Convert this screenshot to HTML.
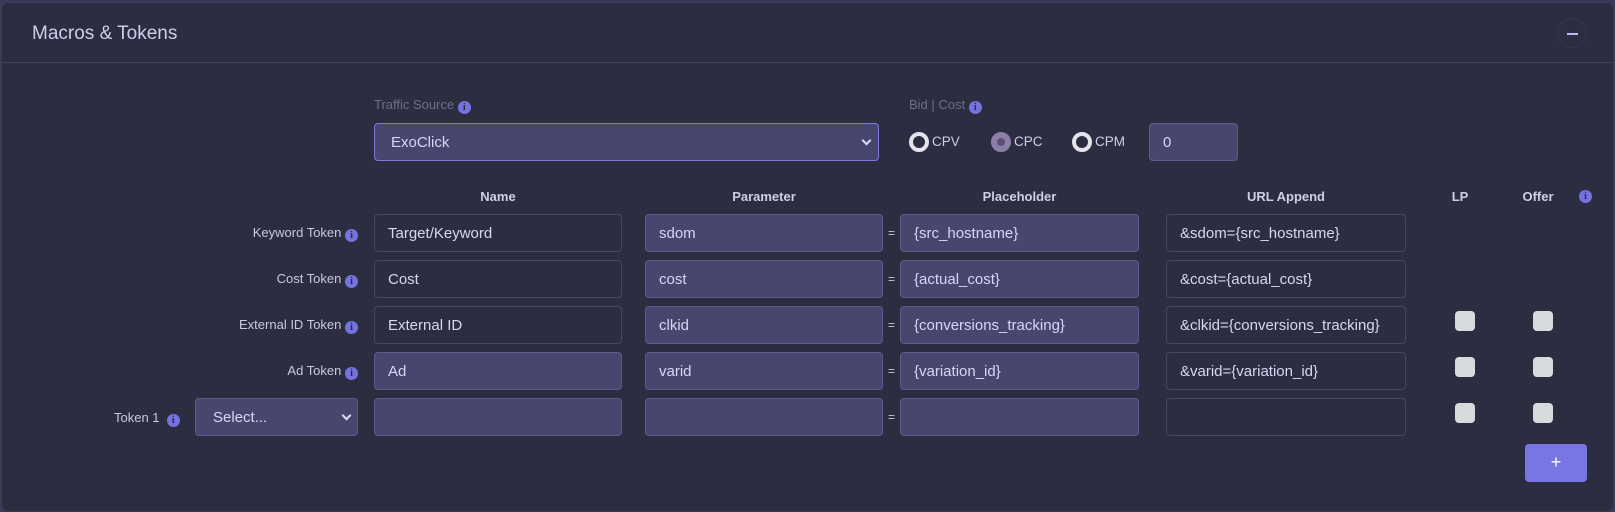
<!DOCTYPE html>
<html><head><meta charset="utf-8"><style>
*{box-sizing:border-box;margin:0;padding:0}
body{width:1615px;height:512px;background:#3b3a58;font-family:"Liberation Sans",sans-serif;position:relative;overflow:hidden}
.card{position:absolute;left:2px;top:3px;width:1611px;height:508px;background:#2d2d42;border-radius:6px}
.hline{position:absolute;left:2px;top:62px;width:1611px;height:1px;background:#45445e}
.a{position:absolute}
.title{left:32px;top:23px;font-size:19px;color:#cfcdea}
.minus{left:1557px;top:18px;width:30px;height:30px;border-radius:50%;border:1px solid #38374f}
.minus:after{content:"";position:absolute;left:9px;top:14px;width:11px;height:2px;background:#bcbaf0}
.lbl{font-size:13px;color:#6f6e85}
.info{display:inline-block;width:13px;height:13px;border-radius:50%;background:#7673e0;color:#2d2d42;font-size:10px;font-weight:bold;text-align:center;line-height:13px;vertical-align:-1px;font-family:"Liberation Serif",serif}
.in{position:absolute;height:38px;border-radius:4px;font-size:15px;color:#d8d6f2;padding-left:13px;line-height:38px;white-space:nowrap;overflow:hidden}
.p{background:#47466e;border:1px solid #5c5b8b}
.d{background:#2d2d42;border:1px solid #48475f}
.hd{position:absolute;top:189px;font-size:13px;font-weight:bold;color:#cfcde8;text-align:center}
.rl{position:absolute;font-size:13px;color:#c9c7e2;text-align:right;width:300px;left:58px}
.eq{position:absolute;left:888px;font-size:12px;color:#c9c7e2}
.cb{position:absolute;width:20px;height:20px;border-radius:4px;background:#d8dbde}
.chev{position:absolute;width:7px;height:7px;border-right:2px solid #e0def5;border-bottom:2px solid #e0def5;transform:rotate(45deg)}
.radio{position:absolute;width:20px;height:20px;border-radius:50%;border:4px solid #e4e4ea;background:#2d2d42}
.rt{position:absolute;font-size:13.5px;color:#cfcde8}
</style></head><body>
<div class="card"></div>
<div class="hline"></div>
<div class="a title">Macros &amp; Tokens</div>
<div class="a minus"></div>

<div class="a lbl" style="left:374px;top:97px">Traffic Source <span class="info">i</span></div>
<div class="in p" style="left:374px;top:123px;width:505px;border-color:#7b78e0;padding-left:16px">ExoClick</div>
<div class="chev" style="left:863px;top:137px"></div>

<div class="a lbl" style="left:909px;top:97px">Bid | Cost <span class="info">i</span></div>
<div class="radio" style="left:909px;top:132px"></div><div class="rt" style="left:932px;top:134px">CPV</div>
<div class="radio" style="left:991px;top:132px;border-color:#8e7fa8;background:#8e7fa8"></div>
<div class="a" style="left:997px;top:138px;width:8px;height:8px;border-radius:50%;background:#5d5074"></div>
<div class="rt" style="left:1014px;top:134px">CPC</div>
<div class="radio" style="left:1072px;top:132px"></div><div class="rt" style="left:1095px;top:134px">CPM</div>
<div class="in p" style="left:1149px;top:123px;width:89px">0</div>

<div class="hd" style="left:374px;width:248px">Name</div>
<div class="hd" style="left:645px;width:238px">Parameter</div>
<div class="hd" style="left:900px;width:239px">Placeholder</div>
<div class="hd" style="left:1166px;width:240px">URL Append</div>
<div class="hd" style="left:1440px;width:40px">LP</div>
<div class="hd" style="left:1513px;width:50px">Offer</div>
<div class="a" style="left:1579px;top:185px"><span class="info">i</span></div>

<div class="rl" style="top:225px">Keyword Token <span class="info">i</span></div>
<div class="in d" style="left:374px;top:214px;width:248px">Target/Keyword</div>
<div class="in p" style="left:645px;top:214px;width:238px">sdom</div>
<div class="eq" style="top:226px">=</div>
<div class="in p" style="left:900px;top:214px;width:239px">{src_hostname}</div>
<div class="in d" style="left:1166px;top:214px;width:240px">&amp;sdom={src_hostname}</div>

<div class="rl" style="top:271px">Cost Token <span class="info">i</span></div>
<div class="in d" style="left:374px;top:260px;width:248px">Cost</div>
<div class="in p" style="left:645px;top:260px;width:238px">cost</div>
<div class="eq" style="top:272px">=</div>
<div class="in p" style="left:900px;top:260px;width:239px">{actual_cost}</div>
<div class="in d" style="left:1166px;top:260px;width:240px">&amp;cost={actual_cost}</div>

<div class="rl" style="top:317px">External ID Token <span class="info">i</span></div>
<div class="in d" style="left:374px;top:306px;width:248px">External ID</div>
<div class="in p" style="left:645px;top:306px;width:238px">clkid</div>
<div class="eq" style="top:318px">=</div>
<div class="in p" style="left:900px;top:306px;width:239px">{conversions_tracking}</div>
<div class="in d" style="left:1166px;top:306px;width:240px">&amp;clkid={conversions_tracking}</div>
<div class="cb" style="left:1455px;top:311px"></div><div class="cb" style="left:1533px;top:311px"></div>

<div class="rl" style="top:363px">Ad Token <span class="info">i</span></div>
<div class="in p" style="left:374px;top:352px;width:248px">Ad</div>
<div class="in p" style="left:645px;top:352px;width:238px">varid</div>
<div class="eq" style="top:364px">=</div>
<div class="in p" style="left:900px;top:352px;width:239px">{variation_id}</div>
<div class="in d" style="left:1166px;top:352px;width:240px">&amp;varid={variation_id}</div>
<div class="cb" style="left:1455px;top:357px"></div><div class="cb" style="left:1533px;top:357px"></div>

<div class="a" style="left:114px;top:410px;font-size:13px;color:#c9c7e2">Token 1 &nbsp;<span class="info">i</span></div>
<div class="in p" style="left:195px;top:398px;width:163px;padding-left:17px">Select...</div>
<div class="chev" style="left:343px;top:412px"></div>
<div class="in p" style="left:374px;top:398px;width:248px"></div>
<div class="in p" style="left:645px;top:398px;width:238px"></div>
<div class="eq" style="top:410px">=</div>
<div class="in p" style="left:900px;top:398px;width:239px"></div>
<div class="in d" style="left:1166px;top:398px;width:240px"></div>
<div class="cb" style="left:1455px;top:403px"></div><div class="cb" style="left:1533px;top:403px"></div>

<div class="a" style="left:1525px;top:444px;width:62px;height:38px;border-radius:4px;background:#7876e4;color:#fff;font-size:18px;text-align:center;line-height:36px">+</div>
</body></html>
